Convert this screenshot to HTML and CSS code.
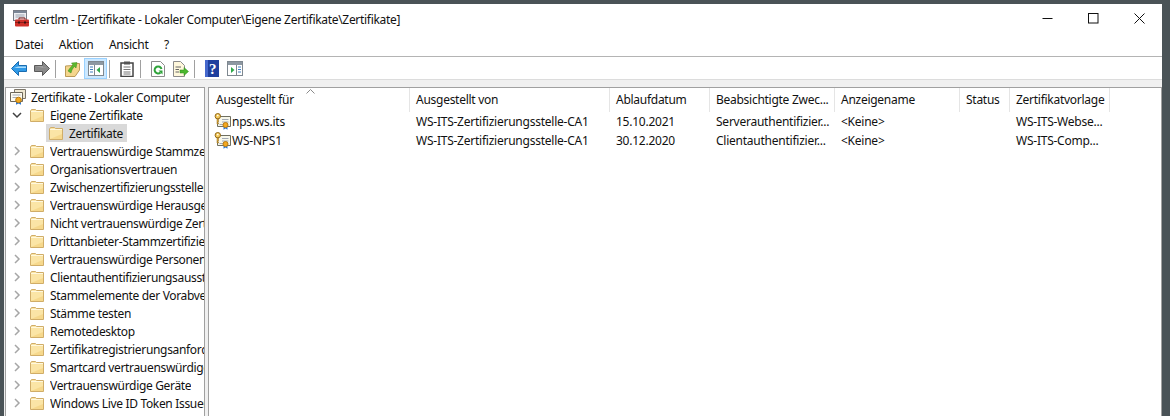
FILE: index.html
```html
<!DOCTYPE html>
<html lang="de">
<head>
<meta charset="utf-8">
<title>certlm</title>
<link rel="stylesheet" href="styles.css">
</head>
<body>
<svg class="defs" width="0" height="0">
  <symbol id="folder" viewBox="0 0 14 13">
    <path d="M.5 2 L.5 12.500 L13.500 12.500 L13.500 1.500 L6.500 1.500 L5.500 .5 L1.500 .5 Z" fill="#fbe5a6" stroke="#d0ad68"/>
    <path d="M1 2.500 H13" stroke="#fff8de" fill="none"/>
    <path d="M1 12 H13 V7 Z" fill="#f6d88c"/>
  </symbol>
  <symbol id="cert" viewBox="0 0 17 17">
    <path d="M3.500 3.500 H16.500 V13.500 H3.500 Z" fill="#f7f7ea" stroke="#6f6f60"/>
    <path d="M8 6.500 H14.500 M8 9 H14.500 M5.500 11.500 H9" stroke="#a3aab5"/>
    <circle cx="3.800" cy="3.200" r="2.700" fill="#f5cb5c" stroke="#92691b"/>
    <circle cx="3.800" cy="2.600" r=".8" fill="#fff"/>
    <path d="M3 6 V11 H4.500 V10 H3.800 V9 H4.500 V6 Z" fill="#e0ac38" stroke="#92691b" stroke-width=".5"/>
    <path d="M9.500 13 L9.500 16.800 L11.500 15.500 L13.500 16.800 L13.500 13 Z" fill="#2f78d0"/>
    <circle cx="11.500" cy="12" r="2.500" fill="#f3a81e" stroke="#b97a10"/>
  </symbol>
  <symbol id="certroot" viewBox="0 0 16 16">
    <path d="M4.500 .5 H15.500 V9.500 H4.500 Z" fill="#efe8d2" stroke="#7c766a"/>
    <path d="M.5 3.500 H12.500 V12.500 H.5 Z" fill="#fdfbf0" stroke="#6c6658"/>
    <path d="M2.500 6 H10.500 M2.500 8.500 H7" stroke="#a3aab5"/>
    <path d="M6 12 L6 15.800 L8.500 14.400 L11 15.800 L11 12 Z" fill="#2f78d0"/>
    <circle cx="8.500" cy="11" r="2.800" fill="#f3a81e" stroke="#b97a10"/>
  </symbol>
  <symbol id="chev-r" viewBox="0 0 10 10"><path d="M3 1 L7 5 L3 9" fill="none" stroke="#a6a6a6" stroke-width="1.500"/></symbol>
  <symbol id="chev-d" viewBox="0 0 10 10"><path d="M1 3 L5 7 L9 3" fill="none" stroke="#404040" stroke-width="1.500"/></symbol>
</svg>

<div class="window">
  <header class="titlebar">
    <svg class="appicon" width="16" height="17" viewBox="0 0 16 17">
      <rect x=".5" y=".5" width="13" height="10" fill="#eceef2" stroke="#777c85"/>
      <path d="M1 2 H13" stroke="#7a8696" stroke-width="2"/>
      <path d="M2.500 5 H11.500 M2.500 7 H11.500" stroke="#9aa2ad"/>
      <rect x="2" y="9.500" width="14" height="7" rx="1" fill="#cf2f28"/>
      <path d="M6 9.500 V8 H12 V9.500" fill="none" stroke="#7e1a16"/>
      <path d="M2 12.500 H16" stroke="#8e1d18"/>
      <rect x="5" y="11.500" width="2" height="2" fill="#3a1210"/>
      <rect x="11" y="11.500" width="2" height="2" fill="#3a1210"/>
    </svg>
    <span class="title">certlm - [Zertifikate - Lokaler Computer\Eigene Zertifikate\Zertifikate]</span>
    <div class="controls">
      <span class="ctl"><svg width="11" height="11" viewBox="0 0 11 11"><path d="M.5 5.500 H10.500" stroke="#111"/></svg></span>
      <span class="ctl"><svg width="11" height="11" viewBox="0 0 11 11"><rect x=".5" y=".5" width="9.500" height="9.500" fill="none" stroke="#111"/></svg></span>
      <span class="ctl"><svg width="11" height="11" viewBox="0 0 11 11"><path d="M.5 .5 L10.500 10.500 M10.500 .5 L.5 10.500" stroke="#111"/></svg></span>
    </div>
  </header>

  <nav class="menubar">
    <span>Datei</span><span>Aktion</span><span>Ansicht</span><span>?</span>
  </nav>

  <div class="toolbar">
    <span class="tool"><svg width="16" height="15" viewBox="0 0 16 15"><path d="M.5 7.500 L7.500 .5 V4.500 H15.500 V10.500 H7.500 V14.500 Z" fill="#2f9ae8" stroke="#1a6cb0"/><path d="M7 5.500 H15 V7 H3 Z" fill="#a9dcfb"/></svg></span>
    <span class="tool"><svg width="16" height="15" viewBox="0 0 16 15"><path d="M15.500 7.500 L8.500 .5 V4.500 H.5 V10.500 H8.500 V14.500 Z" fill="#8a8a8a" stroke="#5a5a5a"/><path d="M1 5.500 H9 V7 H13 Z" fill="#b8b8b8"/></svg></span>
    <i class="sep"></i>
    <span class="tool"><svg width="15" height="16" viewBox="0 0 15 16"><path d="M.5 5 L.5 15.500 L10 15.500 L14.500 9 L14.500 2.500 L9 2.500 L8 4.500 Z" fill="#f5d68c" stroke="#bb9a58"/><path d="M3 10 C5 7 6 5.500 8 4 L6.500 2 L12 1.500 L11 7 L9.500 5.500 C8 7 6.500 9 6 12 Z" fill="#5cb82e" stroke="#3a8a1a" stroke-width=".5"/></svg></span>
    <span class="tool active"><svg width="16" height="15" viewBox="0 0 16 15"><rect x=".5" y=".5" width="15" height="14" fill="#fff" stroke="#7f8890"/><path d="M1 2.500 H15" stroke="#8d98a2" stroke-width="3"/><path d="M6.500 4 V14" stroke="#7f8890"/><path d="M2 6 H5 M2 8.500 H5 M2 11 H5" stroke="#3f7fc0"/><path d="M12 6 L8.500 9 L12 12 Z" fill="#2ea84a"/></svg></span>
    <i class="sep"></i>
    <span class="tool"><svg width="14" height="16" viewBox="0 0 14 16"><rect x="1" y="2" width="12" height="13.500" fill="#fff" stroke="#444" stroke-width="1.500"/><rect x="4" y=".5" width="6" height="3" fill="#555"/><path d="M3.500 6 H10.500 M3.500 8.500 H10.500 M3.500 11 H10.500 M3.500 13 H10.500" stroke="#777"/></svg></span>
    <i class="sep"></i>
    <span class="tool"><svg width="14" height="16" viewBox="0 0 14 16"><path d="M.5 .5 H9.500 L13.500 4.500 V15.500 H.5 Z" fill="#fff" stroke="#8b8b8b"/><path d="M10.500 8 A3.500 3.500 0 1 0 9.500 11.500" fill="none" stroke="#2fa33a" stroke-width="2"/><path d="M7.500 9.500 H11.500 V13.500 Z" fill="#2fa33a"/></svg></span>
    <span class="tool"><svg width="16" height="16" viewBox="0 0 16 16"><path d="M.5 .5 H7.500 L11.500 4.500 V15.500 H.5 Z" fill="#fff8dc" stroke="#8b8b8b"/><path d="M2.500 6 H8 M2.500 8.500 H6 M2.500 11 H6" stroke="#666"/><path d="M7 9 H11 V6.500 L15.500 10.500 L11 14.500 V12 H7 Z" fill="#4bb82e" stroke="#2f8a1c" stroke-width=".5"/></svg></span>
    <i class="sep"></i>
    <span class="tool"><svg width="14" height="17" viewBox="0 0 14 17"><rect width="14" height="17" fill="#1f3f9e"/><rect width="3" height="17" fill="#4668cc"/><text class="q" x="7.500" y="14" text-anchor="middle">?</text></svg></span>
    <span class="tool"><svg width="16" height="15" viewBox="0 0 16 15"><rect x=".5" y=".5" width="15" height="14" fill="#fff" stroke="#7f8890"/><path d="M1 2.500 H15" stroke="#8d98a2" stroke-width="3"/><path d="M9.500 4 V14" stroke="#7f8890"/><path d="M11 6 H14 M11 8.500 H14 M11 11 H14" stroke="#3f7fc0"/><path d="M4 6 L7.500 9 L4 12 Z" fill="#2ea84a"/></svg></span>
  </div>

  <main class="panes">
    <aside class="tree">
      <div class="row root"><svg class="ico-root" width="16" height="16"><use href="#certroot"/></svg><span>Zertifikate - Lokaler Computer</span></div>
      <div class="row"><svg class="tw" width="10" height="10"><use href="#chev-d"/></svg><svg class="fd" width="14" height="13"><use href="#folder"/></svg><span>Eigene Zertifikate</span></div>
      <div class="row leaf"><span class="selected"><svg class="fd" width="14" height="13"><use href="#folder"/></svg><span>Zertifikate</span></span></div>
      <div class="row"><svg class="tw" width="10" height="10"><use href="#chev-r"/></svg><svg class="fd" width="14" height="13"><use href="#folder"/></svg><span>Vertrauenswürdige Stammzertifizierungsstellen</span></div>
      <div class="row"><svg class="tw" width="10" height="10"><use href="#chev-r"/></svg><svg class="fd" width="14" height="13"><use href="#folder"/></svg><span>Organisationsvertrauen</span></div>
      <div class="row"><svg class="tw" width="10" height="10"><use href="#chev-r"/></svg><svg class="fd" width="14" height="13"><use href="#folder"/></svg><span>Zwischenzertifizierungsstellen</span></div>
      <div class="row"><svg class="tw" width="10" height="10"><use href="#chev-r"/></svg><svg class="fd" width="14" height="13"><use href="#folder"/></svg><span>Vertrauenswürdige Herausgeber</span></div>
      <div class="row"><svg class="tw" width="10" height="10"><use href="#chev-r"/></svg><svg class="fd" width="14" height="13"><use href="#folder"/></svg><span>Nicht vertrauenswürdige Zertifikate</span></div>
      <div class="row"><svg class="tw" width="10" height="10"><use href="#chev-r"/></svg><svg class="fd" width="14" height="13"><use href="#folder"/></svg><span>Drittanbieter-Stammzertifizierungsstellen</span></div>
      <div class="row"><svg class="tw" width="10" height="10"><use href="#chev-r"/></svg><svg class="fd" width="14" height="13"><use href="#folder"/></svg><span>Vertrauenswürdige Personen</span></div>
      <div class="row"><svg class="tw" width="10" height="10"><use href="#chev-r"/></svg><svg class="fd" width="14" height="13"><use href="#folder"/></svg><span>Clientauthentifizierungsaussteller</span></div>
      <div class="row"><svg class="tw" width="10" height="10"><use href="#chev-r"/></svg><svg class="fd" width="14" height="13"><use href="#folder"/></svg><span>Stammelemente der Vorabversion</span></div>
      <div class="row"><svg class="tw" width="10" height="10"><use href="#chev-r"/></svg><svg class="fd" width="14" height="13"><use href="#folder"/></svg><span>Stämme testen</span></div>
      <div class="row"><svg class="tw" width="10" height="10"><use href="#chev-r"/></svg><svg class="fd" width="14" height="13"><use href="#folder"/></svg><span>Remotedesktop</span></div>
      <div class="row"><svg class="tw" width="10" height="10"><use href="#chev-r"/></svg><svg class="fd" width="14" height="13"><use href="#folder"/></svg><span>Zertifikatregistrierungsanforderungen</span></div>
      <div class="row"><svg class="tw" width="10" height="10"><use href="#chev-r"/></svg><svg class="fd" width="14" height="13"><use href="#folder"/></svg><span>Smartcard vertrauenswürdige Stämme</span></div>
      <div class="row"><svg class="tw" width="10" height="10"><use href="#chev-r"/></svg><svg class="fd" width="14" height="13"><use href="#folder"/></svg><span>Vertrauenswürdige Geräte</span></div>
      <div class="row"><svg class="tw" width="10" height="10"><use href="#chev-r"/></svg><svg class="fd" width="14" height="13"><use href="#folder"/></svg><span>Windows Live ID Token Issuer</span></div>
    </aside>

    <section class="list">
      <div class="lhead">
        <svg class="sort" width="9" height="5" viewBox="0 0 9 5"><path d="M.5 4.500 L4.500 .5 L8.500 4.500" fill="none" stroke="#8a8a8a"/></svg>
        <div class="c c1">Ausgestellt für</div>
        <div class="c c2">Ausgestellt von</div>
        <div class="c c3">Ablaufdatum</div>
        <div class="c c4">Beabsichtigte Zwec...</div>
        <div class="c c5">Anzeigename</div>
        <div class="c c6">Status</div>
        <div class="c c7">Zertifikatvorlage</div>
      </div>
      <div class="lrow">
        <div class="d c1 first"><svg width="17" height="17"><use href="#cert"/></svg><span>nps.ws.its</span></div>
        <div class="d c2">WS-ITS-Zertifizierungsstelle-CA1</div>
        <div class="d c3">15.10.2021</div>
        <div class="d c4">Serverauthentifizier...</div>
        <div class="d c5">&lt;Keine&gt;</div>
        <div class="d c6"></div>
        <div class="d c7">WS-ITS-Webse...</div>
      </div>
      <div class="lrow">
        <div class="d c1 first"><svg width="17" height="17"><use href="#cert"/></svg><span>WS-NPS1</span></div>
        <div class="d c2">WS-ITS-Zertifizierungsstelle-CA1</div>
        <div class="d c3">30.12.2020</div>
        <div class="d c4">Clientauthentifizier...</div>
        <div class="d c5">&lt;Keine&gt;</div>
        <div class="d c6"></div>
        <div class="d c7">WS-ITS-Comp...</div>
      </div>
    </section>
  </main>
</div>
</body>
</html>
```
FILE: styles.css
```css
* { box-sizing: border-box; }
html, body { margin: 0; height: 100%; }
body {
  width: 1170px;
  height: 416px;
  overflow: hidden;
  background: #4a5357;
  padding: 4px 8px 0 4px;
  font-family: "Noto Sans", "Open Sans", sans-serif;
  font-size: 12px;
  letter-spacing: -.27px;
  color: #111;
}
.defs { position: absolute; }
.window {
  height: 412px;
  background: #fff;
  display: flex;
  flex-direction: column;
  overflow: hidden;
}
.titlebar {
  height: 30px;
  display: flex;
  align-items: center;
  padding-left: 9px;
  flex: none;
}
.title { letter-spacing: -.31px; }
.appicon { margin-right: 5px; margin-top: -2px; flex: none; }
.controls { margin-left: auto; display: flex; margin-top: -2px; }
.ctl {
  width: 46px;
  height: 26px;
  display: flex;
  align-items: center;
  justify-content: center;
}
.menubar {
  height: 22px;
  display: flex;
  align-items: center;
  gap: 15.5px;
  padding: 0 0 1px 11px;
  flex: none;
}
.toolbar {
  height: 24px;
  border-top: 1px solid #b4b4b4;
  border-bottom: 1px solid #dcdcdc;
  display: flex;
  align-items: center;
  padding: 1px 0 0 3px;
  flex: none;
}
.tool {
  width: 23px;
  height: 21px;
  display: flex;
  align-items: center;
  justify-content: center;
  flex: none;
}
.tool.active { background: #cce8ff; border: 1px solid #99d1ff; }
.sep { width: 1px; height: 18px; background: #a0a0a0; margin: 0 5px 0 2px; flex: none; }
.q { font: bold 15px "Liberation Serif", serif; fill: #fff; }
.panes {
  flex: 1;
  min-height: 0;
  background: #f0f0f0;
  padding: 7px 0 0 1px;
  display: flex;
  gap: 3px;
}
.tree {
  width: 200px;
  flex: none;
  background: #fff;
  border: 1px solid #a0a0a0;
  border-bottom: 0;
  overflow: hidden;
  letter-spacing: -.33px;
}
.row {
  height: 18px;
  display: flex;
  align-items: center;
  white-space: nowrap;
  padding-left: 6px;
}
.row > span { min-width: 0; overflow: hidden; }
.tw { flex: none; margin-right: 8px; }
.fd { flex: none; margin-right: 6px; }
.row.root { padding-left: 4px; }
.ico-root { flex: none; margin-right: 5px; }
.row.leaf { padding-left: 40px; }
.selected {
  display: flex;
  align-items: center;
  height: 18px;
  background: #d9d9d9;
  padding: 0 4px 0 3px;
}
.list {
  width: 954px;
  flex: none;
  background: #fff;
  border: 1px solid #a0a0a0;
  border-bottom: 0;
  position: relative;
}
.lhead { display: flex; height: 24px; }
.sort { position: absolute; left: 97px; top: 1px; }
.c {
  border-right: 1px solid #e5e5e5;
  padding-left: 6px;
  line-height: 24px;
  white-space: nowrap;
  overflow: hidden;
  flex: none;
}
.c.c1 { padding-left: 7px; }
.c1 { width: 201px; }
.c2 { width: 200px; }
.c3 { width: 100px; }
.c4 { width: 125px; }
.c5 { width: 125px; }
.c6 { width: 50px; }
.c7 { width: 100px; }
.lrow { display: flex; height: 19px; align-items: center; letter-spacing: -.24px; }
.d { padding-left: 6px; white-space: nowrap; flex: none; }
.d.first { display: flex; align-items: center; padding-left: 5px; }
.d.first svg { flex: none; margin-right: 1px; }
```
